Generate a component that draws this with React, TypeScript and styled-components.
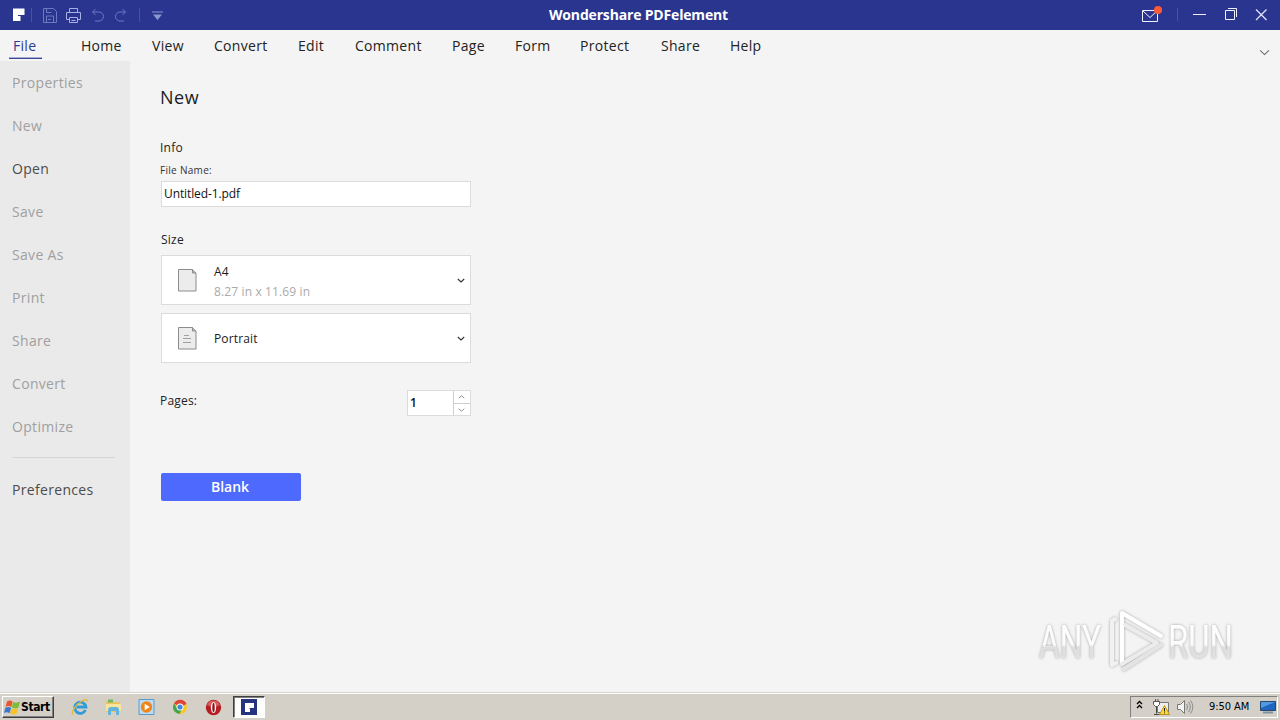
import React from "react";
import styled, { createGlobalStyle, css } from "styled-components";

const GlobalStyle = createGlobalStyle`
  * {
    box-sizing: border-box;
  }

  body {
    margin: 0;
    overflow: hidden;
    font-family: "Open Sans", "Noto Sans", sans-serif;
  }

  svg {
    display: block;
    flex: none;
  }
`;

const Screen = styled.div`
  width: 1280px;
  height: 720px;
  display: flex;
  flex-direction: column;
  background: #f4f4f4;
  position: relative;
`;

/* Title bar */

const TitleBar = styled.header`
  height: 30px;
  flex: none;
  display: grid;
  grid-template-columns: 549px 1fr 140px;
  align-items: center;
  background: #2a3590;
`;

const Title = styled.h1`
  margin: 0;
  color: #fff;
  font-size: 14px;
  line-height: 30px;
  font-weight: 700;
  letter-spacing: -0.17px;
  white-space: nowrap;
`;

/* Ribbon tabs */

const TabBar = styled.nav`
  height: 31px;
  flex: none;
  display: flex;
  padding-left: 13px;
`;

const Tab = styled.div<{ $width: number; $active?: boolean }>`
  width: ${(props) => props.$width}px;
  flex: none;
  color: ${(props) => (props.$active ? "#2f3b92" : "#222")};
  font-size: 14px;
  line-height: 32px;
  letter-spacing: 0.3px;
  white-space: nowrap;
`;

const ActiveLine = styled.div`
  width: 33px;
  height: 1px;
  margin: -4px 0 0 -4px;
  background: #3b4793;
  box-shadow: 0 -1px 0 #a9afd2;
`;

const CollapseButton = styled.div`
  margin-left: auto;
  padding: 19px 10px 0 0;
`;

/* Sidebar */

const Body = styled.div`
  flex: 1;
  display: flex;
  min-height: 0;
`;

const Sidebar = styled.aside`
  width: 130px;
  flex: none;
  padding-left: 12px;
  background: #eaeaea;
`;

const SidebarItem = styled.div<{ $enabled?: boolean }>`
  height: 43px;
  color: ${(props) => (props.$enabled ? "#4c4c4c" : "#a0a0a0")};
  font-size: 14px;
  line-height: 43px;
  letter-spacing: 0.32px;
`;

const SidebarRule = styled.div`
  width: 103px;
  height: 1px;
  margin: 9px 0 10px;
  background: #d6d6d6;
`;

/* New document form */

const Content = styled.main`
  width: 341px;
  padding: 23px 0 0 30px;
`;

const Heading = styled.h2`
  margin: 0;
  color: #1c1c1c;
  font-size: 18px;
  line-height: 26px;
  font-weight: 400;
  letter-spacing: 0.5px;
`;

const SectionLabel = styled.div<{ $top: number; $indent?: number }>`
  margin-top: ${(props) => props.$top}px;
  padding-left: ${(props) => props.$indent || 0}px;
  color: #222;
  font-size: 12px;
  line-height: 20px;
  letter-spacing: 0.25px;
`;

const FieldLabel = styled.div`
  margin-top: 3px;
  color: #333;
  font-size: 10px;
  line-height: 18px;
  letter-spacing: 0.3px;
`;

const box = css`
  border: 1px solid #dcdcdc;
  background: #fff;
  margin-left: 1px;
`;

const NameField = styled.div`
  ${box}
  height: 26px;
  margin-top: 2px;
  padding-left: 2px;
  color: #111;
  font-size: 12px;
  line-height: 24px;
  letter-spacing: -0.1px;
`;

const Select = styled.div<{ $top: number }>`
  ${box}
  height: 50px;
  margin-top: ${(props) => props.$top}px;
  padding: 0 5px 0 16px;
  display: flex;
  align-items: center;
`;

const SelectText = styled.div<{ $drop: number }>`
  flex: 1;
  margin-left: 17px;
  padding-top: ${(props) => props.$drop}px;
  color: #1a1a1a;
  font-size: 12px;
  line-height: 20px;
  letter-spacing: 0.13px;
`;

const SelectHint = styled.div`
  color: #aaa;
`;

const PagesRow = styled.div`
  margin-top: 27px;
  display: flex;
  justify-content: space-between;
  color: #222;
  font-size: 12px;
  line-height: 22px;
  letter-spacing: 0.2px;
`;

const Spinner = styled.div`
  width: 64px;
  height: 26px;
  display: flex;
  border: 1px solid #dcdcdc;
  background: #fff;
`;

const SpinnerValue = styled.div`
  flex: 1;
  padding-left: 2px;
  color: #111;
  font-size: 12px;
  font-weight: 600;
  line-height: 24px;
`;

const SpinnerButtons = styled.div`
  width: 17px;
  display: grid;
  grid-template-rows: 12px 12px;
  border-left: 1px solid #cfcfcf;
`;

const SpinnerButton = styled.div`
  display: flex;
  align-items: center;
  justify-content: center;
  padding-right: 2px;

  & + & {
    border-top: 1px solid #cfcfcf;
  }
`;

const BlankButton = styled.div`
  width: 140px;
  height: 28px;
  margin: 57px 0 0 1px;
  border-radius: 2px;
  background: #4e69fd;
  color: #fff;
  font-size: 14px;
  font-weight: 600;
  line-height: 28px;
  text-align: center;
  text-indent: -2px;
`;

/* Watermark over the window */

const Watermark = styled.div`
  position: absolute;
  left: 1030px;
  top: 602px;
`;

/* Taskbar */

const Taskbar = styled.footer`
  height: 28px;
  flex: none;
  display: flex;
  align-items: center;
  padding: 3px 2px 2px;
  border-top: 1px solid #d8d4cc;
  box-shadow: inset 0 1px 0 #fff;
  background: #d4d0c8;
`;

const StartButton = styled.div`
  width: 52px;
  height: 22px;
  display: flex;
  align-items: center;
  padding-left: 1px;
  border: 1px solid;
  border-color: #fff #404040 #404040 #fff;
  box-shadow: inset -1px -1px 0 #808080;
  color: #000;
  font: 700 12px/20px "DejaVu Sans Condensed", "DejaVu Sans", sans-serif;
  letter-spacing: -0.4px;
`;

const QuickLaunch = styled.div`
  display: grid;
  grid-template-columns: repeat(5, 33.5px);
  align-items: center;
  justify-items: center;
  margin-left: 9px;
`;

const ActiveApp = styled.div`
  width: 32px;
  height: 22px;
  margin-left: 2.5px;
  display: flex;
  align-items: center;
  justify-content: center;
  border: 1px solid;
  border-color: #404040 #fff #fff #404040;
  box-shadow: inset 1px 1px 0 #808080;
  background: #fdfdfc;
`;

const Tray = styled.div`
  width: 148px;
  height: 22px;
  margin-left: auto;
  display: flex;
  align-items: center;
  padding-left: 5px;
  border: 1px solid;
  border-color: #808080 #fff #fff #808080;
`;

const Clock = styled.div`
  width: 51px;
  margin-left: 15px;
  color: #000;
  font: 11px/20px "DejaVu Sans Condensed", "DejaVu Sans", sans-serif;
  letter-spacing: -0.05px;
  white-space: nowrap;
`;

const tabs = [
  { label: "Home", width: 71 },
  { label: "View", width: 62 },
  { label: "Convert", width: 84 },
  { label: "Edit", width: 57 },
  { label: "Comment", width: 97 },
  { label: "Page", width: 63 },
  { label: "Form", width: 65 },
  { label: "Protect", width: 81 },
  { label: "Share", width: 69 },
  { label: "Help", width: 40 },
];

const sidebarItems = [
  { label: "Properties" },
  { label: "New" },
  { label: "Open", enabled: true },
  { label: "Save" },
  { label: "Save As" },
  { label: "Print" },
  { label: "Share" },
  { label: "Convert" },
  { label: "Optimize" },
];

function ToolbarIcons() {
  return (
    <svg width="180" height="30" fill="none">
      <path d="M13 8.500h11.500V15H18v1h2.500v5H13z" fill="#fff" />
      <path d="M31.500 8v14M139.500 8v14" stroke="#4652a6" />
      <g stroke="#6d79c0">
        <path d="M43.500 8.500h10l3 3v11h-13z" />
        <path d="M46.500 22v-6h7v6M46.500 9v3.500h5M48 19.500h3" />
      </g>
      <g stroke="#a7b0e0">
        <path d="M69.500 12V8.500h8V12M69.500 19.500h-3v-7h14v7h-3" />
        <path d="M69.500 17.500h8v5h-8zM71.500 20.500h4" />
      </g>
      <g stroke="#6d79c0">
        <path d="M95.500 9l-3 3 3 3M92.500 12h6.500a4.500 4.500 0 0 1 0 9h-4" />
        <path d="M122.500 9l3 3-3 3M125.500 12H120a4.500 4.500 0 0 0 0 9h4" />
      </g>
      <path d="M152 12h11" stroke="#8d97d0" />
      <path d="M153 14.500h9l-4.500 5.500z" fill="#8d97d0" />
    </svg>
  );
}

function WindowIcons() {
  return (
    <svg width="140" height="30" fill="none" stroke="#f0f2ff">
      <path d="M2.500 10.500h15v11h-15zM3 11l7 6.500 7-6.500" />
      <circle cx="18" cy="10" r="4" fill="#ff5a34" stroke="none" />
      <path d="M37.500 8v13" stroke="#4652a6" />
      <path d="M53 14.500h13" />
      <path d="M85.500 10.500h9v9h-9zM88 8.500h8.500V17" />
      <path
        d="M116 9.500l10.500 10.500M126.500 9.500L116 20"
        stroke="#dfe3ff"
        strokeWidth="1.300"
      />
    </svg>
  );
}

function Chevron({
  up = false,
  color = "#333",
  width = 8,
  height = 5,
  weight = 1.1,
}) {
  return (
    <svg
      width={width}
      height={height}
      viewBox="0 0 8 5"
      preserveAspectRatio="none"
      fill="none"
    >
      <path
        d={up ? "M.8 4L4 1l3.200 3" : "M.8 1L4 4l3.200-3"}
        stroke={color}
        strokeWidth={weight}
      />
    </svg>
  );
}

function PageIcon({ lines = false }) {
  return (
    <svg width="19" height="23" fill="none" stroke="#8c8c8c">
      <path d="M.5.500h14l3.500 3.500v18H.5z" fill="#ececec" />
      <path d="M14.500.500v3.500H18" fill="#bbb" />
      {lines && <path d="M6 8.500h5M5 11.500h8M5 15.500h8" stroke="#a0a0a0" />}
    </svg>
  );
}

function StartFlag() {
  return (
    <svg width="17" height="17" viewBox="0 0 17 16">
      <path d="M3 2c2-1.300 3.900-1.100 5.700 0L7.300 7.500C5.500 6.400 3.600 6.300 1.500 7.400z" fill="#e9582b" />
      <path d="M9.300 2.500c2 1.100 4 1 6.700-.4L14.500 8c-2.200 1.200-4.500 1.200-6.700.1z" fill="#7ebc38" />
      <path d="M1.300 8.200c2-1.100 4-1 5.800 0l-1.500 5.500C3.700 12.600 1.800 12.500 0 13.500z" fill="#3b78cf" />
      <path d="M7.600 8.800c2.200 1.100 4.400 1 6.700-.2L12.700 14c-2.200 1.300-4.400 1.300-6.600.1z" fill="#f6c324" />
    </svg>
  );
}

function ExplorerIcon() {
  return (
    <svg width="18" height="18" viewBox="0 0 18 18" fill="none">
      <path d="M14.500 12a5.600 5.600 0 1 1 .4-3H5.500" stroke="#329bd8" strokeWidth="2.800" />
      <path d="M2 16.500C-.5 14 5 6.500 11 3c3-1.800 5.700-1.800 5.400.7" stroke="#e5bc35" strokeWidth="1.400" />
    </svg>
  );
}

function FolderIcon() {
  return (
    <svg width="17" height="18" viewBox="0 0 17 18">
      <path d="M1 3h5l1 1h8v10H1z" fill="#e8c55f" />
      <path d="M3 1.500h5v3H3z" fill="#75b867" />
      <path d="M1 6h15v7H1z" fill="#f7e49d" />
      <path d="M3 17v-5c0-2 1-3 3-3h5c2 0 3 1 3 3v5h-3v-4H6v4z" fill="#62b4dd" />
    </svg>
  );
}

function PlayerIcon() {
  return (
    <svg width="17" height="18" viewBox="0 0 17 18">
      <path d="M1 1.500h15v15H1z" fill="#b9dcf4" stroke="#599bcb" />
      <circle cx="8.500" cy="9" r="5.700" fill="#f08519" />
      <path d="M6.700 5.800v6.400l5-3.200z" fill="#fff" />
    </svg>
  );
}

function ChromeIcon() {
  return (
    <svg width="16" height="16" viewBox="0 0 16 16">
      <circle cx="8" cy="8" r="7" fill="#f7c928" />
      <path d="M8 8L2 4.400A7 7 0 0 1 14.500 5z" fill="#df4335" />
      <path d="M2 4.400A7 7 0 0 0 7.500 15L10 10 5 9z" fill="#45a453" />
      <circle cx="8" cy="8" r="3.500" fill="#fff" />
      <circle cx="8" cy="8" r="2.600" fill="#4488e4" />
    </svg>
  );
}

function OperaIcon() {
  return (
    <svg width="17" height="17" viewBox="0 0 17 17">
      <circle cx="8.500" cy="8.500" r="7.700" fill="#b51e24" />
      <path d="M2 6a7 7 0 0 1 13 0 12 12 0 0 1-13 0z" fill="#d95b5b" />
      <ellipse cx="8.500" cy="8.500" rx="2.600" ry="5.600" fill="#fff" />
      <ellipse cx="8.500" cy="8.500" rx="1.200" ry="4.800" fill="#901316" />
    </svg>
  );
}

function TrayIcons() {
  return (
    <svg width="58" height="18" fill="none">
      <path d="M1 8l2.500-2.500L6 8M1 4l2.500-2.500L6 4" transform="translate(0 2)" stroke="#000" strokeWidth="1.300" />
      <path d="M21.500 4.500h11v10h-11z" fill="#eee" stroke="#777" />
      <path d="M20.500 6v9.500M18 16.500h8" stroke="#444" />
      <path d="M17.500 3.500h6v3l-2 2h-2l-2-2z" fill="#fff" stroke="#555" />
      <path d="M19.500 1v2M22 1v2" stroke="#555" />
      <path d="M28.500 7.500l5 9h-10z" fill="#ffd83b" stroke="#bd931b" />
      <path d="M28.500 10v3.500M28.500 14.500v1" stroke="#222" />
      <path d="M41.500 6.500h3l4-4v13l-4-4h-3z" fill="#f3f3f3" stroke="#777" />
      <path d="M50.500 6c1.200 2 1.200 4 0 6M52.500 4c2.300 3 2.300 7 0 10M54.500 2.500c3 4 3 9 0 13" stroke="#8a8a8a" />
    </svg>
  );
}

function DisplayIcon() {
  return (
    <svg width="16" height="15" viewBox="0 0 16 15">
      <path d="M.5 1.500h15v9H.5z" fill="#1d65bd" stroke="#27476f" />
      <path d="M1 2h14L1 8z" fill="#4f9be3" />
      <path d="M3 12.500h10" stroke="#82919e" strokeWidth="2" />
    </svg>
  );
}

function AnyRunMark() {
  return (
    <Watermark>
      <svg width="230" height="80" fill="none">
        <defs>
          <linearGradient id="fade" x1="0" y1="0" x2="0" y2="1">
            <stop offset="0" stopColor="#fff" />
            <stop offset=".55" stopColor="#fbfbfb" />
            <stop offset=".6" stopColor="#dedede" />
            <stop offset="1" stopColor="#e6e6e6" />
          </linearGradient>
          <filter id="edge" x="-10%" y="-10%" width="120%" height="120%">
            <feDropShadow dx="0" dy="0" stdDeviation="1.500" floodColor="#888" floodOpacity=".75" />
          </filter>
        </defs>
        <g filter="url(#edge)">
          <g
            fill="url(#fade)"
            fontFamily="Roboto, sans-serif"
            fontSize="46"
            fontWeight="400"
          >
            <text x="9" y="56" textLength="62" lengthAdjust="spacingAndGlyphs">
              ANY
            </text>
            <text x="138" y="56" textLength="65" lengthAdjust="spacingAndGlyphs">
              RUN
            </text>
          </g>
          <g strokeLinejoin="round" strokeLinecap="round" strokeWidth="4">
            <path d="M85 17l-3 2v44l4-2" stroke="#f1f1f1" />
            <path d="M92 61V11l39 23" stroke="#fff" />
            <path d="M95 23l32 18-35 21" stroke="#ececec" />
            <path d="M131 43L94 67" stroke="#e4e4e4" />
          </g>
        </g>
      </svg>
    </Watermark>
  );
}

export default function App() {
  return (
    <Screen>
      <GlobalStyle />
      <TitleBar>
        <ToolbarIcons />
        <Title>Wondershare PDFelement</Title>
        <WindowIcons />
      </TitleBar>

      <TabBar>
        <Tab $width={68} $active>
          File
          <ActiveLine />
        </Tab>
        {tabs.map((tab) => (
          <Tab key={tab.label} $width={tab.width}>
            {tab.label}
          </Tab>
        ))}
        <CollapseButton>
          <Chevron color="#666" width={11} height={7} weight={0.75} />
        </CollapseButton>
      </TabBar>

      <Body>
        <Sidebar>
          {sidebarItems.map((item) => (
            <SidebarItem key={item.label} $enabled={item.enabled}>
              {item.label}
            </SidebarItem>
          ))}
          <SidebarRule />
          <SidebarItem $enabled>Preferences</SidebarItem>
        </Sidebar>

        <Content>
          <Heading>New</Heading>
          <SectionLabel $top={28}>Info</SectionLabel>
          <FieldLabel>File Name:</FieldLabel>
          <NameField>Untitled-1.pdf</NameField>

          <SectionLabel $top={23} $indent={1}>
            Size
          </SectionLabel>
          <Select $top={5}>
            <PageIcon />
            <SelectText $drop={3}>
              A4
              <SelectHint>8.27 in x 11.69 in</SelectHint>
            </SelectText>
            <Chevron />
          </Select>
          <Select $top={8}>
            <PageIcon lines />
            <SelectText $drop={2}>Portrait</SelectText>
            <Chevron />
          </Select>

          <PagesRow>
            Pages:
            <Spinner>
              <SpinnerValue>1</SpinnerValue>
              <SpinnerButtons>
                <SpinnerButton>
                  <Chevron up color="#888" width={7} height={4} />
                </SpinnerButton>
                <SpinnerButton>
                  <Chevron color="#888" width={7} height={4} />
                </SpinnerButton>
              </SpinnerButtons>
            </Spinner>
          </PagesRow>

          <BlankButton>Blank</BlankButton>
        </Content>
      </Body>

      <Taskbar>
        <StartButton>
          <StartFlag />
          Start
        </StartButton>
        <QuickLaunch>
          <ExplorerIcon />
          <FolderIcon />
          <PlayerIcon />
          <ChromeIcon />
          <OperaIcon />
        </QuickLaunch>
        <ActiveApp>
          <svg width="16" height="16">
            <path d="M0 0h16v16H0z" fill="#26337f" />
            <path d="M4 4h9v5H8.500v1H9v3H4z" fill="#fff" />
          </svg>
        </ActiveApp>
        <Tray>
          <TrayIcons />
          <Clock>9:50 AM</Clock>
          <DisplayIcon />
        </Tray>
      </Taskbar>
      <AnyRunMark />
    </Screen>
  );
}
